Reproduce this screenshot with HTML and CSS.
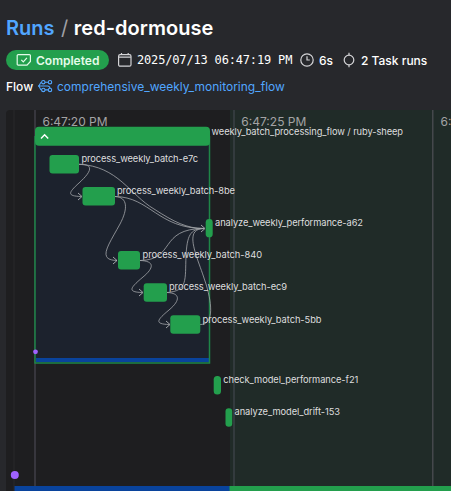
FILE: index.html
```html
<!DOCTYPE html>
<html lang="en">
<head>
<meta charset="utf-8">
<title>red-dormouse</title>
<link rel="stylesheet" href="styles.css">
</head>
<body>
<header class="header">
  <h1 class="crumbs"><a class="link">Runs</a><span class="slash">/</span><span class="name">red-dormouse</span></h1>
  <div class="meta">
    <span class="badge">
      <svg width="16" height="14" viewBox="0 0 16 14"><path d="M2.2 1.6h11.2a1 1 0 0 1 1 1v5.8l-3.4 3.8H2.2a1 1 0 0 1-1-1V2.6a1 1 0 0 1 1-1zM5.3 6.8l2 2 3.6-4"/></svg>
      <span class="badge-text">Completed</span>
    </span>
    <svg class="ic calendar" width="16" height="16" viewBox="0 0 16 16"><rect x="1.6" y="2.7" width="12.4" height="11.5" rx="1.5"/><path d="M1.7 5.2h12.2M4.5 1v2M11.2 1v2"/></svg>
    <span class="time">2025/07/13 06:47:19 PM</span>
    <svg class="ic clock" width="16" height="16" viewBox="0 0 16 16"><circle cx="8" cy="8" r="6.2"/><path d="M8 4.3V8h2.8"/></svg>
    <span class="dur">6s</span>
    <svg class="ic task" width="14" height="16" viewBox="0 0 14 16"><circle cx="7" cy="8" r="4.8"/><path d="M7 .7v2.5M7 12.8v2.5"/></svg>
    <span class="tasks">2 Task runs</span>
  </div>
  <div class="flow">
    <span class="flow-label">Flow</span>
    <svg class="flow-icon" width="16" height="14" viewBox="0 0 16 14"><circle cx="6.3" cy="3.2" r="1.7"/><circle cx="13" cy="3.2" r="1.7"/><circle cx="6.3" cy="10.9" r="1.7"/><circle cx="13" cy="10.9" r="1.7"/><path d="M8 3.2h3.3M8 10.9h3.3M4.6 3.2C2.6 3.2 3.4 7 1 7h9.6c2 0 2.2.6 2.4 2.2M1 7c2.4 0 1.6 3.9 3.6 3.9"/></svg>
    <a class="link flow-name">comprehensive_weekly_monitoring_flow</a>
  </div>
</header>
<main class="canvas">
<svg class="graph" width="445" height="381" viewBox="6 110 445 381">
  <rect class="tint" x="230" y="110" width="221" height="381"/>
  <rect class="faint" x="13" y="110" width="2" height="381"/>
  <rect class="grid" x="34" y="110" width="2" height="381"/>
  <rect class="grid-tint" x="233" y="110" width="2" height="381"/>
  <rect class="grid-edge" x="432" y="110" width="1.5" height="381"/>
  <g class="axis">
    <text x="42.5" y="126.3" textLength="65">6:47:20 PM</text>
    <text x="241.3" y="126.3" textLength="65">6:47:25 PM</text>
    <text x="440.5" y="126.3" textLength="65">6:47:30 PM</text>
  </g>
  <rect class="sub" x="35" y="136" width="174.5" height="227"/>
  <rect class="running" x="36" y="358" width="173" height="4"/>
  <path class="sub-line" d="M35 136V363H209.5V136"/>
  <rect class="node" x="35" y="126.7" width="175" height="19" rx="4"/>
  <path class="chevron" d="M41 138.5l3.6-3.7 3.6 3.7"/>
  <g class="edges">
    <path d="M79 164.3C118 166 130 195 154 209C174 222 187 228.5 204 228.5"/>
    <path d="M79 164.3C96 164 90 173 79 183C68 193 67 196 81 196.5"/>
    <path d="M115 196.5C150 197 158 228.5 204 228.5"/>
    <path d="M115 196.5C128 197 128 209 120 224C108 246 97 260 117 260.5"/>
    <path d="M140 260.5C176 260 158 228.5 204 228.5"/>
    <path d="M140 260.5C155 261 154 268 143 277C130 288 127 292 142 292.5"/>
    <path d="M167 292.5C188 291 185 280 186 256C187 236 190 228.5 204 228.5"/>
    <path d="M167 292.5C180 293 181 300 169 310C157 320 154 324 169 324.5"/>
    <path d="M200 324.5C213 325 213 307 206 284C198 258 182 228.5 204 228.5"/>
    <path class="tips" d="M78 193l4 3.5-4 3.5M113 257l4 3.5-4 3.5M139 289l4 3.5-4 3.5M166 321l4 3.5-4 3.5M201 225l4 3.5-4 3.5"/>
  </g>
  <g class="node">
    <rect x="49.5" y="155" width="29.5" height="18.5" rx="3"/>
    <rect x="82.5" y="187" width="32.5" height="18.5" rx="3"/>
    <rect x="205.7" y="219" width="7" height="18.3" rx="3.4"/>
    <rect x="118" y="251" width="22" height="18.5" rx="3"/>
    <rect x="143.7" y="283.3" width="23.3" height="18.4" rx="3"/>
    <rect x="170.3" y="315.3" width="30" height="18.4" rx="3"/>
    <rect x="213.7" y="376" width="7.3" height="18.5" rx="3.5"/>
    <rect x="225.5" y="408.3" width="6.7" height="18.4" rx="3.3"/>
  </g>
  <g class="label">
    <text x="211.5" y="134.8" textLength="191.5">weekly_batch_processing_flow / ruby-sheep</text>
    <text x="81.5" y="162.2" textLength="116.5">process_weekly_batch-e7c</text>
    <text x="117" y="194.3" textLength="118">process_weekly_batch-8be</text>
    <text x="215" y="226.3" textLength="148">analyze_weekly_performance-a62</text>
    <text x="142.5" y="258.4" textLength="119.5">process_weekly_batch-840</text>
    <text x="169" y="290.4" textLength="118">process_weekly_batch-ec9</text>
    <text x="202.5" y="322.6" textLength="119">process_weekly_batch-5bb</text>
    <text x="223.3" y="383.4" textLength="135">check_model_performance-f21</text>
    <text x="234.5" y="415.4" textLength="105.5">analyze_model_drift-153</text>
  </g>
  <circle class="event" cx="35.5" cy="351.8" r="2.4"/>
  <circle class="event" cx="14.8" cy="475" r="4"/>
  <rect class="running" x="14.5" y="486" width="215.5" height="5"/>
  <rect class="node" x="229.5" y="486" width="221.5" height="5"/>
</svg>
</main>
</body>
</html>
```
FILE: styles.css
```css
* { box-sizing: border-box; }
body {
  margin: 0;
  width: 451px;
  height: 491px;
  overflow: hidden;
  background: #27282c;
  color: #fff;
  font-family: Inter, "Liberation Sans", sans-serif;
  font-size: 12px;
}
svg { flex: none; fill: none; }
.header { height: 110px; padding: 16px 0 0 6px; }
.crumbs {
  display: flex;
  margin: 0;
  height: 24px;
  font-size: 20px;
  line-height: 24px;
  font-weight: 600;
}
.link { color: #51a6ff; }
.name { letter-spacing: .05px; }
.slash { margin: 0 5.5px 0 6.5px; font-weight: 400; color: #a0a0a6; }
.meta { display: flex; align-items: center; height: 20px; margin-top: 10px; white-space: nowrap; }
.badge {
  display: flex;
  align-items: center;
  width: 103px;
  height: 20px;
  padding-left: 10px;
  gap: 4px;
  border-radius: 10px;
  background: #239f4d;
  color: #e5fbea;
  font-weight: 600;
}
.badge svg { stroke: #e5fbea; stroke-width: 1.2; }
.ic { stroke: #d4d4d7; stroke-width: 1.2; }
.calendar { margin-left: 8px; }
.time {
  width: 162px;
  margin-left: 4px;
  font-family: "DejaVu Sans Mono", monospace;
  font-size: 12px;
  letter-spacing: -.17px;
}
.dur { width: 22px; margin-left: 4px; font-weight: 500; }
.task { margin-left: 1px; }
.tasks { margin-left: 5px; font-weight: 500; }
.flow { display: flex; align-items: center; height: 16px; margin-top: 8px; }
.flow-label { width: 31px; font-weight: 500; }
.flow-icon { stroke: #51a6ff; stroke-width: 1.1; }
.flow-name { margin-left: 4px; }
.canvas {
  width: 445px;
  height: 381px;
  margin-left: 6px;
  overflow: hidden;
  border-radius: 4px 0 0 0;
  background: #1e1e20;
}
.graph { display: block; }
.tint { fill: #202b28; }
.faint { fill: #232325; }
.grid { fill: #37363d; }
.grid-tint { fill: #333b3e; }
.grid-edge { fill: #45484c; }
.axis { fill: #a3a3a5; font-size: 12px; }
.sub { fill: #1c222d; }
.sub-line { stroke: #1e8648; stroke-width: 1.5; }
.running { fill: #09439c; }
.node { fill: #239f4d; }
.chevron { stroke: #fff; stroke-width: 1.4; }
.edges { stroke: #a5a7ab; stroke-width: .8; }
.tips { stroke: #c4c5c8; }
.label { fill: #dededf; font-size: 9.3px; }
.event { fill: #a062ff; }
```
